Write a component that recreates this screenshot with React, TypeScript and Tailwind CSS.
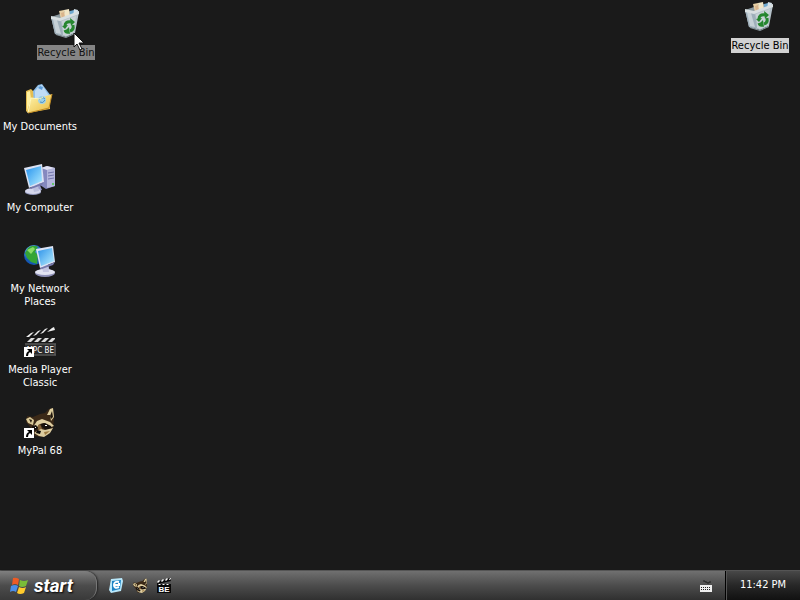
import React from "react";

function ShortcutArrow() {
  return (
    <g>
      <path d="M0 21h10v10H0z" fill="#fff" />
      <path d="M3 23h5v5l-2-2q-2 1-2 4H2q0-4 3-5z" fill="#000" />
    </g>
  );
}

function RecycleIcon() {
  return (
    <svg viewBox="0 0 32 32" className="size-8" aria-hidden="true">
      <path d="M1 9l9-3 10-3 9 0-6 7-14 3z" fill="#8b999f" />
      <path d="M9 3l5-1 2 8-5 1z" fill="#e6cfa4" />
      <path d="M14 2l5-1 1 8-5 2z" fill="#f2e6c6" />
      <path d="M11 5l3-1 1 6-3 1z" fill="#d9b48c" />
      <path d="M20 3l4-1v6l-4 2z" fill="#6fa9cf" />
      <path d="M24 1l4 1-1 5-4 2z" fill="#d5e2ea" />
      <path d="M1 9l9 2 19-7-4 21-9 4-11-3z" fill="#b4c1c8" />
      <path d="M1 9l9 2 5 17-10-2z" fill="#9eafba" />
      <path d="M3 11l4 1 4 14-5-1z" fill="#c6d1d7" />
      <path d="M1 8l9 2 19-7v3l-19 7-9-2z" fill="#d8dfe1" />
      <path d="M12 13l14-5-2 16-8 4-3-1z" fill="#c7d2d6" />
      <path d="M6 26l10 3 9-4v1l-9 4-10-3z" fill="#8a989f" />
      <g fill="none" stroke="#25862f" strokeWidth="3">
        <path d="M15 18q0-5 6-4" />
        <path d="M23 17q1 5-3 6" />
        <path d="M19 24q-3 1-4-2" />
      </g>
      <path d="M20 10l5 4-4 4zM19 19l-4 4 5 3zM12 18l6-1-3 4z" fill="#25862f" />
    </svg>
  );
}

function DocumentsIcon() {
  return (
    <svg viewBox="0 0 32 32" className="size-8" aria-hidden="true">
      <defs>
        <linearGradient id="folder" x1="0" y1="0" x2="1" y2="1">
          <stop offset="0" stopColor="#fff6b0" />
          <stop offset="1" stopColor="#e9b93c" />
        </linearGradient>
      </defs>
      <path d="M2 8l5-2 3 3 16 3v14L4 30 2 28z" fill="#e5bd50" />
      <path d="M9 8l5-6 4-1 9 12-5 11-12-3z" fill="#8fbfe9" />
      <path d="M11 8l4-5 3-1 7 11-4 8-10-3z" fill="#c0dcf5" />
      <path d="M14 5l2-2 3 1-1 3z" fill="#5c9cda" />
      <path d="M4 30L7 15l9 1 3-2 9-3-3 14z" fill="url(#folder)" />
      <path d="M3 28V9l3-1 1 8z" fill="#fff1a0" />
      <circle cx="18" cy="17" r="4" fill="#9ed1e8" />
      <path d="M15 17q3-4 6-1M16 19q3 2 5-2" fill="none" stroke="#518fbe" />
      <path d="M4 30l3-15 9 1 3-2" fill="none" stroke="#fff7bd" />
      <path d="M4 30l21-5 3-14" fill="none" stroke="#c28c24" />
    </svg>
  );
}

function ComputerIcon() {
  return (
    <svg viewBox="0 0 32 32" className="size-8" aria-hidden="true">
      <defs>
        <linearGradient id="screen" x1="0" y1="0" x2="1" y2="1">
          <stop offset="0" stopColor="#2592ee" />
          <stop offset="1" stopColor="#b1ecff" />
        </linearGradient>
      </defs>
      <path d="M17 4l6-2 8 2v18l-9 3-6-4z" fill="#8589bf" />
      <path d="M23 6l8-2v18l-8 2z" fill="#b4b6dc" />
      <path d="M17 4l6-2 8 2-8 2z" fill="#e0e1f3" />
      <path d="M24 9l6-1M24 12l6-1M24 15l6-1" stroke="#7376ad" />
      <path d="M28 19h2v2h-2z" fill="#62c86a" />
      <path d="M8 21l7-2 3 7-8 2z" fill="#979acb" />
      <ellipse cx="9" cy="28" rx="8" ry="3" fill="#9298be" />
      <ellipse cx="9" cy="27" rx="8" ry="3" fill="#d5d7ec" />
      <path d="M8 20l6 1 1 6-5 1z" fill="#bbbfdd" />
      <path d="M0 4l18-4 2 18-15 6z" fill="#dce2f3" />
      <path d="M2 6l15-4 1 15-12 5z" fill="url(#screen)" />
      <path d="M5 24l15-6-2 3-11 4z" fill="#7679ae" />
    </svg>
  );
}

function NetworkIcon() {
  return (
    <svg viewBox="0 0 32 32" className="size-8" aria-hidden="true">
      <defs>
        <radialGradient id="ocean" cx="35%" cy="25%">
          <stop offset="0" stopColor="#74c6ff" />
          <stop offset="1" stopColor="#1557b5" />
        </radialGradient>
        <linearGradient id="glass" x1="0" y1="0" x2="1" y2="1">
          <stop offset="0" stopColor="#2c91e9" />
          <stop offset="1" stopColor="#b9f0ff" />
        </linearGradient>
      </defs>
      <circle cx="10" cy="10" r="10" fill="url(#ocean)" />
      <path d="M4 3q5-4 10-1l-3 5 3 3-1 9-6-2-4-4-2-5z" fill="#35a535" />
      <path d="M3 5l6-3 2 2-4 5z" fill="#8bdc67" />
      <path d="M16 20l8-1 2 8-9 1z" fill="#a1a4cd" />
      <ellipse cx="21" cy="28" rx="10" ry="4" fill="#8e90b7" />
      <ellipse cx="21" cy="27" rx="10" ry="3" fill="#e2e3f1" />
      <path d="M18 21l6-1 1 7h-6z" fill="#c5c6e1" />
      <path d="M12 4l17-3 2 16-15 6z" fill="#dde4f5" />
      <path d="M14 6l14-3 2 13-13 5z" fill="url(#glass)" />
      <path d="M16 23l15-6-2 3-11 4z" fill="#7779ac" />
    </svg>
  );
}

function MediaIcon() {
  return (
    <svg viewBox="0 0 32 32" className="size-8" aria-hidden="true">
      <path d="M1 8L30 1l1 5L2 13z" fill="#161616" />
      <path d="M2 11l5-4 3-1-5 5zM9 10l5-5 3-1-5 5zM16 8l5-5 3-1-5 5zM23 6l5-4 2-1 1 3-4 1z" fill="#eee" />
      <path d="M1 12h31v5H1z" fill="#171717" />
      <path d="M3 16l4-4h4l-4 4zM10 16l4-4h4l-4 4zM17 16l4-4h4l-4 4zM24 16l4-4h3v1l-3 3z" fill="#ddd" />
      <path d="M1 17h31v13H1z" fill="#333" />
      <path d="M1 18h31M1 29h31M31 18v11" stroke="#606060" />
      <path d="M3 19h27v9H3z" fill="#2a2a2a" />
      <text x="30" y="27" textAnchor="end" fill="#fff" fontFamily="DejaVu Sans Condensed, sans-serif" fontSize="8">MPC BE</text>
      <ShortcutArrow />
    </svg>
  );
}

function RaccoonFace() {
  return (
    <g>
      <path d="M3 9l6 1 7-3 5-1 4-4 4-1 1 11-1 9-4 6-7 3-7-1-4-8-5-6z" fill="#3b2917" />
      <path d="M23 8l3-6 3-1 1 9-3 4-1-6z" fill="#dfcf9f" />
      <path d="M26 9l2-5 1 6-2 2z" fill="#22180e" />
      <path d="M2 12l4-2 4 3-1 5-5-2z" fill="#dccb99" />
      <path d="M5 12l3 1-1 3z" fill="#24190e" />
      <path d="M13 14l5-2 8 3 4 4-3 1-7-4-4 1-3 3-5 1 3-4z" fill="#dfcfa2" />
      <path d="M17 17l4-1 6 3 1 3-6 1-4-3z" fill="#17110d" />
      <path d="M8 19l4-1 2 3-3 3-3-2z" fill="#17110d" />
      <path d="M14 18l2-1 2 5-2 3-2-3z" fill="#826238" />
      <path d="M17 22l4 1 8-2-3 5-6 4-5-1-5-3 3-2z" fill="#dccca0" />
      <path d="M13 23l4 1-1 3-4-1z" fill="#0e0c0a" />
      <path d="M20 25l6-1-5 4z" fill="#9d7b42" />
      <path d="M21 18h2v1h-2zM11 20h1v1h-1z" fill="#fff" />
    </g>
  );
}

function RaccoonIcon() {
  return (
    <svg viewBox="0 0 32 32" className="size-8" aria-hidden="true">
      <RaccoonFace />
      <ShortcutArrow />
    </svg>
  );
}

type ItemProps = { label: string; children: React.ReactNode; labelClass?: string };

function DesktopItem({ label, children, labelClass = "text-white" }: ItemProps) {
  return (
    <button type="button" className="flex w-20 flex-col items-center gap-[5px]">
      {children}
      <span className={"leading-[13px] " + labelClass}>{label}</span>
    </button>
  );
}

function WindowsFlag() {
  return (
    <svg viewBox="0 0 20 18" className="h-[18px] w-5 shrink-0" aria-hidden="true">
      <path d="M3 1q3-1 6 1L8 8Q5 6 2 8z" fill="#ed5b25" />
      <path d="M10 3q4 2 8 0l-2 6q-4 2-7 0z" fill="#79bd38" />
      <path d="M1 9q4-2 7 0l-2 6q-3-2-6 0z" fill="#4b8ee8" />
      <path d="M9 10q4 2 7 0l-2 6q-4 2-7 0z" fill="#ffcb2d" />
    </svg>
  );
}

export default function App() {
  return (
    <div className="flex h-screen flex-col overflow-hidden bg-[#1a1a1a] font-['DejaVu_Sans_Condensed','Noto_Sans',sans-serif] text-[11px]">
      <main className="relative flex-1">
        <nav aria-label="Desktop" className="grid w-20 auto-rows-[81px] pt-[83px]">
          <DesktopItem label="My Documents"><DocumentsIcon /></DesktopItem>
          <DesktopItem label="My Computer"><ComputerIcon /></DesktopItem>
          <DesktopItem label="My Network Places"><NetworkIcon /></DesktopItem>
          <DesktopItem label="Media Player Classic"><MediaIcon /></DesktopItem>
          <DesktopItem label="MyPal 68"><RaccoonIcon /></DesktopItem>
        </nav>
        <div className="absolute left-[26px] top-2">
          <DesktopItem label="Recycle Bin" labelClass="bg-[#858585] py-px text-[#111]"><RecycleIcon /></DesktopItem>
        </div>
        <div className="absolute right-0 top-px">
          <DesktopItem label="Recycle Bin" labelClass="bg-[#d2d2d2] py-px text-black"><RecycleIcon /></DesktopItem>
        </div>
        <svg viewBox="0 0 12 19" className="absolute left-[73px] top-8 h-[19px] w-3" aria-hidden="true">
          <path d="M1 1v14l3-3 3 6 2-1-3-6h5z" fill="#fff" stroke="#111" />
        </svg>
      </main>

      <footer className="flex h-[30px] shrink-0 items-stretch border-t border-[#555] bg-linear-to-b from-[#707070] via-[#4c4c4c] to-[#303030]">
        <button type="button" className="flex w-[97px] items-center gap-1 rounded-r-xl border-r border-[#777] bg-linear-to-b from-[#808080] via-[#4c4c4c] to-[#393939] pl-[10px] text-white shadow-[1px_0_2px_#222]">
          <WindowsFlag />
          <span className="font-['Roboto',sans-serif] text-[19px] font-bold italic leading-5 [text-shadow:1px_1px_2px_#000]">start</span>
        </button>
        <div className="flex flex-1 items-center gap-2 pl-[11px]">
          <button type="button" aria-label="Internet browser">
            <svg viewBox="0 0 16 16" className="size-4">
              <path d="M3 1l11-1 1 3-2 10-10 2-2-3z" fill="#b9e8fb" />
              <path d="M4 3l9-1-1 9-8 2z" fill="#1d83c4" />
              <path d="M11 4q-5-1-5 3 0 4 5 2M6 7h5V5" fill="none" stroke="#fff" strokeWidth="2" />
            </svg>
          </button>
          <button type="button" aria-label="MyPal">
            <svg viewBox="0 0 32 32" className="size-4"><RaccoonFace /></svg>
          </button>
          <button type="button" aria-label="Media Player">
            <svg viewBox="0 0 16 16" className="size-4">
              <path d="M1 4l13-4 1 3L2 6h13v9H1z" fill="#080808" />
              <path d="M1 4l2-2 1 1-2 2zM5 3l2-2 1 1-2 2zM9 2l2-2 1 1-2 2zM13 1l2-1v1l-2 1zM3 6h2L4 7H2zM7 6h2L8 7H6zM11 6h2l-1 1h-2z" fill="#fff" />
              <text x="8" y="14" textAnchor="middle" fill="#fff" fontFamily="Liberation Sans, sans-serif" fontSize="8" fontWeight="bold">BE</text>
            </svg>
          </button>
        </div>
        <button type="button" aria-label="Keyboard" className="flex w-[38px] items-center justify-center">
          <svg viewBox="0 0 14 14" className="size-[14px]">
            <path d="M4 2h2v1h2v1h2V3h2" fill="none" stroke="#222" />
            <path d="M1 6h12v7H1z" fill="#eee" />
            <path d="M2 8h1v1H2zM4 8h1v1H4zM6 8h1v1H6zM8 8h1v1H8zM10 8h1v1h-1zM2 10h1v1H2zM4 10h1v1H4zM6 10h1v1H6zM8 10h1v1H8zM10 10h1v1h-1z" fill="#222" />
          </svg>
        </button>
        <div className="flex w-[75px] items-center justify-center border-l border-black bg-linear-to-b from-[#484848] via-[#272727] to-[#111] text-white shadow-[inset_1px_0_0_#555]">
          <time>11:42 PM</time>
        </div>
      </footer>
    </div>
  );
}
